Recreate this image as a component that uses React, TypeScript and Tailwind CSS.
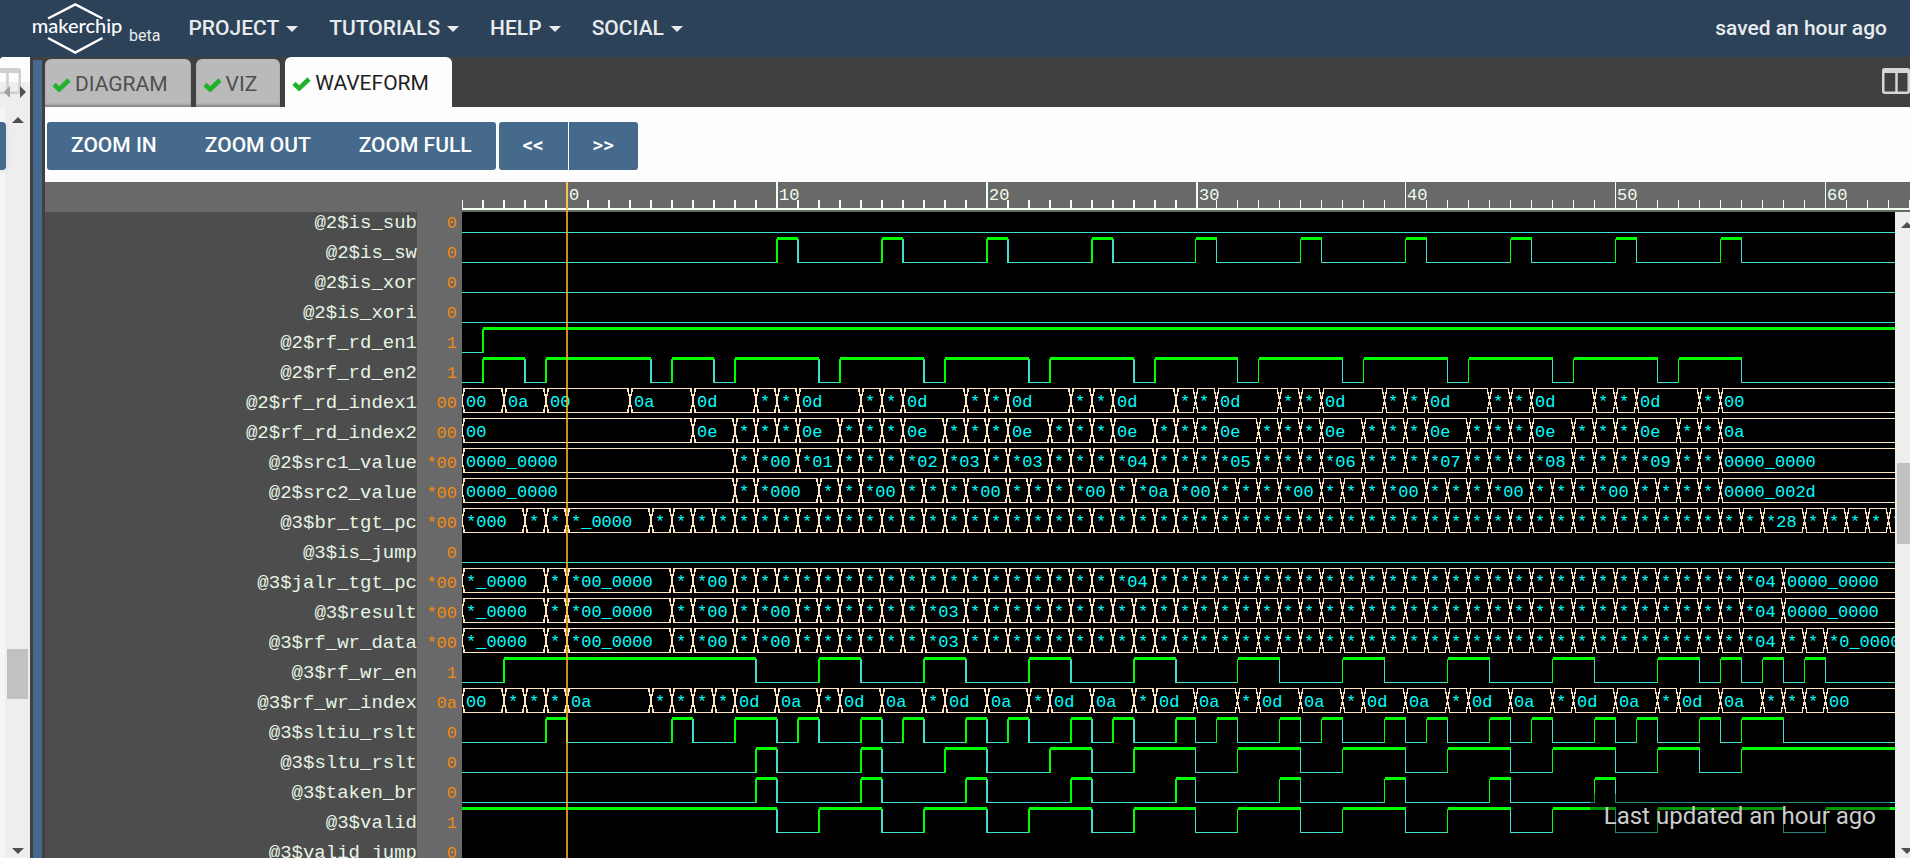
import type { ReactNode } from "react";

const CYCLE = 21;
const ROW = 30;
const FIRST = -5;
const LAST = 64;

const cycleX = (t: number, snapFrom = 30) => (t < snapFrom ? 105 + t * CYCLE : 103.5 + t * CYCLE);

type Span = [number, number];
type Cell = [number, string];
type Signal = { name: string; value: string; high?: Span[]; cells?: Cell[] };

const every = (from: number, to: number, width: number): Span[] => {
  const out: Span[] = [];
  for (let t = from; t <= to; t += 5) out.push([t, t + width]);
  return out;
};

const stars = (from: number, to: number): Cell[] => {
  const out: Cell[] = [];
  for (let t = from; t < to; t++) out.push([t, "*"]);
  return out;
};

const loop = (from: number, to: number, pattern: Cell[]): Cell[] => {
  const out: Cell[] = [];
  for (let t = from; t <= to; t += 5) pattern.forEach(([d, s]) => out.push([t + d, s]));
  return out;
};

const signals: Signal[] = [
  { name: "@2$is_sub", value: "0" },
  { name: "@2$is_sw", value: "0", high: every(10, 55, 1) },
  { name: "@2$is_xor", value: "0" },
  { name: "@2$is_xori", value: "0" },
  { name: "@2$rf_rd_en1", value: "1", high: [[-4, LAST]] },
  { name: "@2$rf_rd_en2", value: "1", high: [[-4, -2], [-1, 4], [5, 7], ...every(8, 48, 4), [53, 56]] },
  {
    name: "@2$rf_rd_index1",
    value: "00",
    cells: [[-5, "00"], [-3, "0a"], [-1, "00"], [3, "0a"], ...loop(6, 46, [[0, "0d"], [3, "*"], [4, "*"]]), [51, "0d"], [54, "*"], [55, "00"]],
  },
  {
    name: "@2$rf_rd_index2",
    value: "00",
    cells: [[-5, "00"], ...loop(6, 46, [[0, "0e"], [2, "*"], [3, "*"], [4, "*"]]), [51, "0e"], [53, "*"], [54, "*"], [55, "0a"]],
  },
  {
    name: "@2$src1_value",
    value: "*00",
    cells: [
      [-5, "0000_0000"], [8, "*"], [9, "*00"], [11, "*01"], ...stars(13, 16), [16, "*02"], [18, "*03"], [20, "*"], [21, "*03"],
      ...stars(23, 26), [26, "*04"], ...stars(28, 31), [31, "*05"], ...stars(33, 36), [36, "*06"], ...stars(38, 41), [41, "*07"],
      ...stars(43, 46), [46, "*08"], ...stars(48, 51), [51, "*09"], [53, "*"], [54, "*"], [55, "0000_0000"],
    ],
  },
  {
    name: "@2$src2_value",
    value: "*00",
    cells: [
      [-5, "0000_0000"], [8, "*"], [9, "*000"], [12, "*"], [13, "*"], [14, "*00"], ...stars(16, 19), [19, "*00"], ...stars(21, 24),
      [24, "*00"], [26, "*"], [27, "*0a"], [29, "*00"], ...loop(31, 46, [[0, "*"], [1, "*"], [2, "*"], [3, "*00"]]),
      ...stars(51, 55), [55, "0000_002d"],
    ],
  },
  {
    name: "@3$br_tgt_pc",
    value: "*00",
    cells: [[-5, "*000"], [-2, "*"], [-1, "*"], [0, "*_0000"], ...stars(4, 57), [57, "*28"], ...stars(59, 64)],
  },
  { name: "@3$is_jump", value: "0" },
  {
    name: "@3$jalr_tgt_pc",
    value: "*00",
    cells: [
      [-5, "*_0000"], [-1, "*"], [0, "*00_0000"], [5, "*"], [6, "*00"], ...stars(8, 26), [26, "*04"], ...stars(28, 56),
      [56, "*04"], [58, "0000_0000"],
    ],
  },
  {
    name: "@3$result",
    value: "*00",
    cells: [
      [-5, "*_0000"], [-1, "*"], [0, "*00_0000"], [5, "*"], [6, "*00"], [8, "*"], [9, "*00"], ...stars(11, 17), [17, "*03"],
      ...stars(19, 56), [56, "*04"], [58, "0000_0000"],
    ],
  },
  {
    name: "@3$rf_wr_data",
    value: "*00",
    cells: [
      [-5, "*_0000"], [-1, "*"], [0, "*00_0000"], [5, "*"], [6, "*00"], [8, "*"], [9, "*00"], ...stars(11, 17), [17, "*03"],
      ...stars(19, 56), [56, "*04"], [58, "*"], [59, "*"], [60, "*0_0000"],
    ],
  },
  { name: "@3$rf_wr_en", value: "1", high: [[-3, 9], ...every(12, 52, 2), [55, 56], [57, 58], [59, 60]] },
  {
    name: "@3$rf_wr_index",
    value: "0a",
    cells: [
      [-5, "00"], ...stars(-3, 0), [0, "0a"], ...stars(4, 8), ...loop(8, 48, [[0, "0d"], [2, "0a"], [4, "*"]]),
      [53, "0d"], [55, "0a"], ...stars(57, 60), [60, "00"],
    ],
  },
  {
    name: "@3$sltiu_rslt",
    value: "0",
    high: [[-1, 0], [5, 6], [8, 10], [11, 12], ...loop(14, 49, [[0, ""], [2, ""]]).map(([t]): Span => [t, t + 1]), [54, 55], [56, 58]],
  },
  {
    name: "@3$sltu_rslt",
    value: "0",
    high: [[9, 10], [14, 15], [18, 20], [23, 25], ...every(27, 47, 3), [52, 54], [56, LAST]],
  },
  { name: "@3$taken_br", value: "0", high: every(9, 49, 1) },
  { name: "@3$valid", value: "1", high: [[-5, 10], ...every(12, 47, 3), [52, 58], [60, LAST]] },
  { name: "@3$valid_jump", value: "0" },
];

function Bit({ row, high = [] }: { row: number; high?: Span[] }) {
  const hi = row * ROW - 3.5;
  const lo = hi + 24;
  const parts: ReactNode[] = [];
  let at = FIRST;
  high.forEach(([a, b]) => {
    const x1 = cycleX(a);
    const x2 = cycleX(b);
    if (a > at) parts.push(<path key={`l${a}`} d={`M${cycleX(at)} ${lo}H${x1}`} className="stroke-[#40e0d0]" />);
    if (b < LAST) parts.push(<path key={`f${a}`} d={`M${x2} ${hi}V${lo + 0.5}`} className="stroke-[#40e0d0]" />);
    if (a > FIRST) parts.push(<path key={`r${a}`} d={`M${x1} ${hi}V${lo + 0.5}`} className="stroke-[#00ff00]" />);
    parts.push(<path key={`h${a}`} d={`M${x1} ${hi}H${x2}`} className="stroke-[#00ff00] [stroke-width:3]" />);
    at = b;
  });
  if (at < LAST) parts.push(<path key="end" d={`M${cycleX(at)} ${lo}H${cycleX(LAST)}`} className="stroke-[#40e0d0]" />);
  return <g className="fill-none [stroke-width:1.4]">{parts}</g>;
}

function Bus({ row, cells }: { row: number; cells: Cell[] }) {
  const top = row * ROW - 3.5;
  return (
    <g>
      {cells.map(([t, label], i) => {
        const x1 = cycleX(t);
        const last = i === cells.length - 1;
        const x2 = last ? cycleX(LAST + 1) : cycleX(cells[i + 1][0]);
        return (
          <g key={t}>
            <path
              d={`M${x1 + 2} ${top}H${x2 - 2}V${top + 3}L${x2 - 1} ${top + 6}L${x2} ${top + 12}L${x2 - 1} ${top + 18}L${x2 - 2} ${top + 21}V${top + 24}H${x1 + 2}V${top + 21}L${x1 + 1} ${top + 18}L${x1} ${top + 12}L${x1 + 1} ${top + 6}L${x1 + 2} ${top + 3}Z`}
              className="fill-none stroke-[#ffe4c4] [stroke-width:1.4]"
            />
            <text x={Math.floor(x1) + 4} y={top + 18.5} className="fill-[#00ffff]">
              {label}
            </text>
          </g>
        );
      })}
    </g>
  );
}

function Ruler() {
  const ticks: number[] = [];
  for (let t = FIRST; t <= LAST; t++) ticks.push(t);
  return (
    <svg className="block h-[30px] min-w-0 flex-1 font-['Liberation_Mono',monospace] text-[17px]" shapeRendering="crispEdges" role="img" aria-label="Cycle ruler">
      <g className="fill-none stroke-[#f0fff0] [stroke-width:1.4]">
        {ticks.map((t) => (
          <path key={t} d={`M${cycleX(t, 31)} ${t >= 0 && t % 10 === 0 ? 0 : 18}V27`} />
        ))}
        <path d="M0 27H2000" className="[stroke-width:2]" />
      </g>
      {ticks
        .filter((t) => t >= 0 && t % 10 === 0)
        .map((t) => (
          <text key={t} x={Math.floor(cycleX(t, 31)) + 2} y={18} className="fill-[#f0fff0]">
            {t}
          </text>
        ))}
      <path d="M105 0V30" className="stroke-[#ffb32f]/80 [stroke-width:2]" />
    </svg>
  );
}

function Waves() {
  return (
    <svg className="block min-w-0 flex-1 bg-black font-['Liberation_Mono',monospace] text-[17px]" shapeRendering="crispEdges" role="img" aria-label="Waveforms">
      {signals.map((s, i) => (s.cells ? <Bus key={s.name} row={i} cells={s.cells} /> : <Bit key={s.name} row={i} high={s.high} />))}
      <path d="M105 0V2000" className="stroke-[#ffb32f]/80 [stroke-width:2]" />
    </svg>
  );
}

function Check() {
  return (
    <svg viewBox="0 0 19 14" className="h-[14px] w-[19px] shrink-0" aria-hidden="true">
      <path d="M2 6.5L7.2 11.4L17 2" fill="none" stroke="#1fb22a" strokeWidth="4.6" />
    </svg>
  );
}

function SplitIcon({ className }: { className: string }) {
  return (
    <svg viewBox="0 0 28 26" className={`h-[26px] w-7 shrink-0 ${className}`} fill="none" stroke="currentColor" aria-hidden="true">
      <rect x="1.25" y="1.25" width="25.5" height="23.5" rx="1.5" strokeWidth="2.5" />
      <path d="M1 3H27" strokeWidth="4" />
      <path d="M14.5 4V25" strokeWidth="2.5" />
    </svg>
  );
}

function Arrow({ dir, className = "" }: { dir: "up" | "down" | "left" | "right"; className?: string }) {
  const d = { up: "M0 6L6 0L12 6Z", down: "M0 0L6 6L12 0Z", left: "M6 0L0 6L6 12Z", right: "M0 0L6 6L0 12Z" }[dir];
  const upright = dir === "up" || dir === "down";
  return (
    <svg viewBox={upright ? "0 0 12 6" : "0 0 6 12"} className={`${upright ? "h-[6px] w-3" : "h-3 w-[6px]"} block shrink-0 ${className}`} aria-hidden="true">
      <path d={d} fill="currentColor" />
    </svg>
  );
}

function Header() {
  return (
    <header className="flex h-[57px] shrink-0 items-center bg-[#2c4258] text-[21px] font-medium text-[#e8ebee]">
      <a href="#home" className="ml-8 flex shrink-0 items-start text-white" aria-label="makerchip beta">
        <svg viewBox="0 0 92 54" className="block h-[54px] w-[92px]" aria-hidden="true">
          <g fill="none" stroke="currentColor" strokeWidth="2.5">
            <path d="M16 16.5L43.3 2.5L70.5 16.5" />
            <path d="M16 36L43.3 50.5L70.5 36" />
          </g>
          <text x="45" y="31" textAnchor="middle" fill="currentColor" className="font-['Lato',sans-serif] text-[20px] font-medium">
            makerchip
          </text>
        </svg>
        <span className="ml-[5px] mt-[22px] text-base font-normal text-[#e8ebee]">beta</span>
      </a>
      <nav className="ml-7 flex items-center gap-[31px]">
        {["PROJECT", "TUTORIALS", "HELP", "SOCIAL"].map((m) => (
          <button key={m} type="button" className="flex items-center gap-[7px]">
            {m}
            <Arrow dir="down" />
          </button>
        ))}
      </nav>
      <span className="ml-auto mr-[23px]">saved an hour ago</span>
    </header>
  );
}

function LeftPane() {
  return (
    <aside className="flex w-[30px] shrink-0 flex-col overflow-hidden rounded-tl bg-[#fdfdfd]">
      <div className="flex h-[50px] shrink-0 flex-col justify-start bg-linear-to-b from-[#fdfdfd] from-50% to-[#eeeeee] to-50% pt-[11px]">
        <SplitIcon className="-ml-[7px] text-[#cfcfcf]" />
        <div className="-mt-2 flex justify-between pl-1 pr-1">
          <Arrow dir="left" className="text-[#a0a0a0]" />
          <Arrow dir="right" className="text-[#505050]" />
        </div>
      </div>
      <div className="flex min-h-0 flex-1">
        <div className="w-[5px] shrink-0 bg-[#f5f5f5] pt-[15px]">
          <div className="relative h-12 w-[6px] rounded-r bg-[#466a8c] shadow-md" />
        </div>
        <div className="flex flex-1 flex-col items-center bg-[#eeeeee] pb-1 pt-[10px] text-[#505050]">
          <Arrow dir="up" />
          <div className="flex-1" />
          <div className="h-[50px] w-[21px] bg-[#c1c1c1]" />
          <div className="h-[149px]" />
          <Arrow dir="down" />
        </div>
      </div>
    </aside>
  );
}

function Tabs() {
  const idle = "mt-[2px] bg-[#bababa] pt-[3px] text-[#4f4f4f] shadow-[inset_0_-3px_3px_-1px_rgba(0,0,0,0.3)]";
  return (
    <div role="tablist" className="flex h-[50px] shrink-0 items-stretch gap-[5px] bg-[#404040] text-[21px]">
      {["DIAGRAM", "VIZ", "WAVEFORM"].map((name) => {
        const active = name === "WAVEFORM";
        return (
          <button
            key={name}
            type="button"
            role="tab"
            aria-selected={active}
            className={`flex items-center gap-1 rounded-t-md pl-[7px] pr-[23px] ${active ? "bg-[#fdfdfd] pt-[4px] text-[#1f1f1f]" : idle}`}
          >
            <Check />
            {name}
          </button>
        );
      })}
      <div className="ml-auto w-7 pt-[11px]">
        <SplitIcon className="text-[#d6d6d6]" />
      </div>
    </div>
  );
}

function Toolbar() {
  return (
    <div className="flex h-[75px] shrink-0 items-start gap-[3px] pl-[2px] pt-[15px] text-[21px] font-medium text-white">
      <div className="flex h-12 overflow-hidden rounded-[3px] bg-[#466a8c]">
        {["ZOOM IN", "ZOOM OUT", "ZOOM FULL"].map((b) => (
          <button key={b} type="button" className="px-6">
            {b}
          </button>
        ))}
      </div>
      <div className="flex h-12 gap-px overflow-hidden rounded-[3px]">
        {["<<", ">>"].map((b) => (
          <button key={b} type="button" className="w-[69px] bg-[#466a8c]">
            {b}
          </button>
        ))}
      </div>
    </div>
  );
}

export default function App() {
  return (
    <div className="flex h-screen flex-col overflow-hidden bg-[#404040] font-['Roboto',sans-serif]">
      <Header />
      <div className="flex min-h-0 flex-1">
        <LeftPane />
        <div className="flex w-[15px] shrink-0 px-[3px] pt-[3px]">
          <div className="flex-1 bg-[#466a8f]" />
        </div>
        <main className="relative flex min-w-0 flex-1 flex-col bg-[#fdfdfd]">
          <Tabs />
          <Toolbar />
          <div className="flex shrink-0 bg-[#696969]">
            <div className="w-[417px] shrink-0" />
            <Ruler />
          </div>
          <div className="flex min-h-0 flex-1">
            <ul className="w-[417px] shrink-0 overflow-hidden bg-linear-to-r from-[#4d4d4d] from-[372px] to-[#696969] to-[372px] font-['Liberation_Mono',monospace]">
              {signals.map((s) => (
                <li key={s.name} className="flex h-[30px] items-baseline text-right leading-[23px]">
                  <span className="w-[372px] text-[19px] text-[#e6f5e6]">{s.name}</span>
                  <span className="flex-1 pr-[5px] text-[17px] text-[#f28a0d]">{s.value}</span>
                </li>
              ))}
            </ul>
            <Waves />
            <div className="flex w-[15px] shrink-0 flex-col overflow-hidden bg-[#eeeeee] pb-1 pl-[2px] pt-[10px] text-[#505050]">
              <Arrow dir="up" className="ml-1" />
              <div className="h-[235px]" />
              <div className="h-[81px] bg-[#c1c1c1]" />
              <div className="flex-1" />
              <Arrow dir="down" className="ml-1" />
            </div>
          </div>
          <p className="absolute bottom-5 right-5 bg-black/40 px-[14px] py-1 text-2xl leading-9 text-[#cccccc]">Last updated an hour ago</p>
        </main>
      </div>
    </div>
  );
}
